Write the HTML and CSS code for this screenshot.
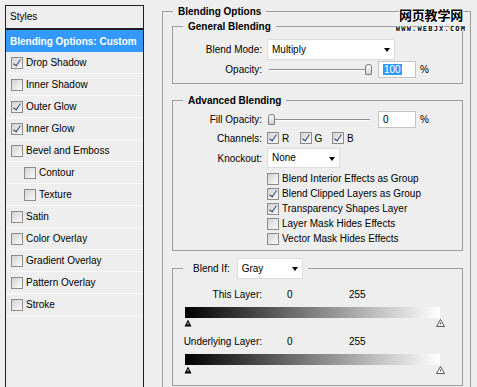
FILE: index.html
```html
<!DOCTYPE html>
<html lang="en">
<head>
    <meta charset="UTF-8">
    <meta name="viewport" content="width=device-width, initial-scale=1.0">
    <title>Layer Style - Blending Options</title>
    <link rel="stylesheet" href="styles.css">
</head>
<body>
    <div class="dialog">
        <div class="styles-list">
            <div class="list-head">Styles</div>
            <div class="list-item selected">Blending Options: Custom</div>
            <div class="list-item"><span class="cb on"></span>Drop Shadow</div>
            <div class="list-item"><span class="cb"></span>Inner Shadow</div>
            <div class="list-item"><span class="cb on"></span>Outer Glow</div>
            <div class="list-item"><span class="cb on"></span>Inner Glow</div>
            <div class="list-item"><span class="cb"></span>Bevel and Emboss</div>
            <div class="list-item sub"><span class="cb"></span>Contour</div>
            <div class="list-item sub"><span class="cb"></span>Texture</div>
            <div class="list-item"><span class="cb"></span>Satin</div>
            <div class="list-item"><span class="cb"></span>Color Overlay</div>
            <div class="list-item"><span class="cb"></span>Gradient Overlay</div>
            <div class="list-item"><span class="cb"></span>Pattern Overlay</div>
            <div class="list-item"><span class="cb"></span>Stroke</div>
        </div>

        <fieldset class="group outer">
            <legend>Blending Options</legend>

            <fieldset class="group general">
                <legend>General Blending</legend>
                <div class="row mode-row">
                    <label>Blend Mode:</label>
                    <div class="select mode">Multiply</div>
                </div>
                <div class="row slider-row">
                    <label>Opacity:</label>
                    <div class="slider"><span class="thumb" style="left: 98px"></span></div>
                    <div class="num"><span class="picked">100</span></div>
                    <span class="pct">%</span>
                </div>
            </fieldset>

            <fieldset class="group advanced">
                <legend>Advanced Blending</legend>
                <div class="row slider-row">
                    <label>Fill Opacity:</label>
                    <div class="slider"><span class="thumb" style="left: 1px"></span></div>
                    <div class="num">0</div>
                    <span class="pct">%</span>
                </div>
                <div class="row chan-row">
                    <label>Channels:</label>
                    <span class="chan"><span class="cb on"></span>R</span>
                    <span class="chan"><span class="cb on"></span>G</span>
                    <span class="chan"><span class="cb on"></span>B</span>
                </div>
                <div class="row knock-row">
                    <label>Knockout:</label>
                    <div class="select knock">None</div>
                </div>
                <div class="check-list">
                    <div class="check-line"><span class="cb"></span>Blend Interior Effects as Group</div>
                    <div class="check-line"><span class="cb on"></span>Blend Clipped Layers as Group</div>
                    <div class="check-line"><span class="cb on"></span>Transparency Shapes Layer</div>
                    <div class="check-line"><span class="cb"></span>Layer Mask Hides Effects</div>
                    <div class="check-line"><span class="cb"></span>Vector Mask Hides Effects</div>
                </div>
            </fieldset>

            <fieldset class="group blend-if">
                <legend>
                    <div class="legend-inner">
                        <span class="blend-label">Blend If:</span>
                        <div class="select gray">Gray</div>
                    </div>
                </legend>
                <div class="row layer-row">
                    <label>This Layer:</label>
                    <span class="v0">0</span>
                    <span class="v255">255</span>
                </div>
                <div class="bar"></div>
                <div class="thumbs">
                    <svg width="8" height="8" viewBox="0 0 8 8"><path d="M4 0.5 L7.5 7.5 H0.5 Z" fill="#000"/><rect x="3.5" y="3.5" width="1" height="2" fill="#fff"/></svg>
                    <svg width="9" height="8" viewBox="0 0 9 8"><path d="M4.5 0.5 L8.5 7.5 H0.5 Z" fill="#fff" stroke="#555"/><rect x="4" y="3.5" width="1" height="2" fill="#555"/></svg>
                </div>
                <div class="row layer-row under">
                    <label>Underlying Layer:</label>
                    <span class="v0">0</span>
                    <span class="v255">255</span>
                </div>
                <div class="bar"></div>
                <div class="thumbs">
                    <svg width="8" height="8" viewBox="0 0 8 8"><path d="M4 0.5 L7.5 7.5 H0.5 Z" fill="#000"/><rect x="3.5" y="3.5" width="1" height="2" fill="#fff"/></svg>
                    <svg width="9" height="8" viewBox="0 0 9 8"><path d="M4.5 0.5 L8.5 7.5 H0.5 Z" fill="#fff" stroke="#555"/><rect x="4" y="3.5" width="1" height="2" fill="#555"/></svg>
                </div>
            </fieldset>
        </fieldset>

        <div class="watermark">
            <div class="wm-cn">网页教学网</div>
            <div class="wm-url">WWW.WEBJX.COM</div>
        </div>
    </div>
</body>
</html>
```

FILE: styles.css
```css
body {
    margin: 0;
    background-color: #eeeeee;
    color: #000;
    font-family: "Liberation Sans", Arial, sans-serif;
    font-size: 10px;
    overflow: hidden;
}
.dialog {
    position: relative;
    display: flex;
    align-items: flex-start;
    gap: 18px;
    padding: 5px 0 0 5px;
    height: 387px;
    box-sizing: border-box;
    overflow: hidden;
}

/* left list of styles */
.styles-list {
    width: 139px;
    height: 400px;
    box-sizing: border-box;
    border: 1px solid #1e1e1e;
    flex-shrink: 0;
}
.list-head {
    height: 22px;
    line-height: 22px;
    padding-left: 4px;
    border-bottom: 2px solid #1e1e1e;
}
.list-item {
    display: flex;
    align-items: center;
    height: 22px;
    box-sizing: border-box;
    padding-left: 5px;
    border-bottom: 1px solid #f9f9f9;
}
.list-item.selected {
    background-color: #3399ff;
    color: #fff;
    font-weight: bold;
    padding-left: 4px;
    border-bottom: none;
}
.list-item.sub {
    padding-left: 18px;
}

/* checkbox */
.cb {
    position: relative;
    width: 12px;
    height: 12px;
    box-sizing: border-box;
    border: 1px solid #8c8c8c;
    background: linear-gradient(135deg, #d2d2d2, #fbfbfb);
    margin-right: 3px;
    flex-shrink: 0;
}
.cb.on::after {
    content: '';
    position: absolute;
    left: 3px;
    top: 0;
    width: 3px;
    height: 7px;
    border: solid #34497e;
    border-width: 0 1.5px 1.5px 0;
    transform: rotate(35deg);
}

/* group boxes */
.group {
    margin: 0;
    padding: 0;
    border: 1px solid #9c9c9c;
    min-width: 0;
}
.group legend {
    margin-left: 10px;
    padding: 0 5px;
    font-weight: bold;
    line-height: 13px;
}
.outer {
    width: 309px;
    height: 420px;
    box-sizing: border-box;
    flex-shrink: 0;
}
.general {
    margin: 2px 7px 0 9px;
    padding: 6px 0 5px;
}
.advanced {
    margin: 10px 7px 0 9px;
    padding: 4px 0 4px;
}
.blend-if {
    margin: 7px 7px 0 9px;
    padding: 8px 0 11px;
}
.blend-if legend {
    font-weight: normal;
}
.legend-inner {
    display: flex;
    align-items: center;
}
.blend-label {
    margin: 0 7px 0 5px;
}

/* form rows */
.row {
    display: flex;
    align-items: center;
}
.row label {
    width: 89px;
    margin-right: 5px;
    text-align: right;
    flex-shrink: 0;
}
.mode-row {
    height: 21px;
}
.slider-row {
    height: 17px;
    margin-top: 1px;
}
.advanced .slider-row {
    margin-top: 0;
}
.chan-row {
    height: 20px;
}
.knock-row {
    height: 20px;
}
.chan {
    display: flex;
    align-items: center;
    width: 32.5px;
}

.select {
    position: relative;
    height: 21px;
    line-height: 19px;
    box-sizing: border-box;
    padding-left: 4px;
    background: #fff;
    border: 1px solid #dcdcdc;
}
.select::after {
    content: '';
    position: absolute;
    right: 4px;
    top: 8px;
    border-left: 3.5px solid transparent;
    border-right: 3.5px solid transparent;
    border-top: 4px solid #000;
}
.mode {
    width: 128px;
}
.knock {
    width: 73px;
    height: 20px;
    line-height: 18px;
}
.gray {
    width: 66px;
}

.slider {
    position: relative;
    width: 108px;
    height: 17px;
    flex-shrink: 0;
}
.slider::before {
    content: '';
    position: absolute;
    left: 2px;
    right: 5px;
    top: 8px;
    border-top: 1px solid #8f8f8f;
    border-bottom: 1px solid #fff;
}
.thumb {
    position: absolute;
    top: 3px;
    width: 7px;
    height: 11px;
    box-sizing: border-box;
    border: 1px solid #7a7a7a;
    border-radius: 3px 3px 1px 1px;
    background: linear-gradient(#fdfdfd, #d4d4d4);
}
.num {
    margin-left: 3px;
    width: 38px;
    height: 17px;
    box-sizing: border-box;
    border: 1px solid #c4c4c4;
    background: #fff;
    padding-left: 4px;
    line-height: 15px;
}
.picked {
    background: #3399ff;
    color: #fff;
    padding: 0 1px;
}
.pct {
    margin-left: 4px;
}

.check-list {
    margin: 3px 0 0 94px;
}
.check-line {
    display: flex;
    align-items: center;
    height: 15px;
}

/* blend if sliders */
.layer-row {
    height: 14px;
}
.layer-row.under {
    margin-top: 7px;
}
.v0 {
    width: 82px;
    padding-left: 20px;
    box-sizing: border-box;
}
.bar {
    margin: 6px 0 0 12px;
    width: 255px;
    height: 11px;
    background: linear-gradient(to right, #000, #fff);
}
.thumbs {
    display: flex;
    justify-content: space-between;
    align-items: flex-end;
    margin-left: 11px;
    width: 261px;
    height: 9px;
}

/* watermark over the corner */
.watermark {
    position: absolute;
    top: 7px;
    right: 10px;
    width: 72px;
    text-align: center;
    text-shadow: 1px 0 #fff, -1px 0 #fff, 0 1px #fff, 0 -1px #fff;
}
.wm-cn {
    font: bold 13px "Noto Sans CJK SC", sans-serif;
    line-height: 15px;
    letter-spacing: -0.2px;
}
.wm-url {
    margin-top: 3px;
    font: bold 7px "DejaVu Sans Mono", monospace;
    line-height: 8px;
    letter-spacing: 1.2px;
}
```
